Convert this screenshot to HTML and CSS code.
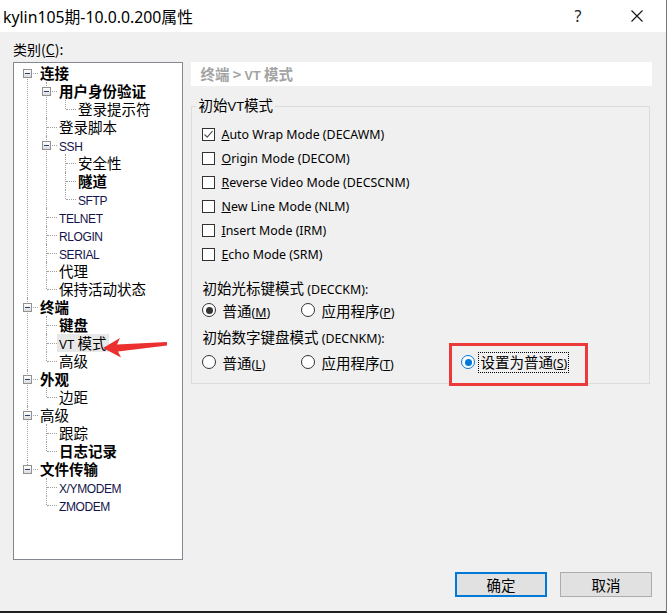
FILE: index.html
```html
<!DOCTYPE html>
<html lang="zh-CN">
<head>
<meta charset="utf-8">
<title>kylin105期-10.0.0.200属性</title>
<link rel="stylesheet" href="styles.css">
</head>
<body>
<div class="window">
  <div class="titlebar">
    <div class="title">kylin105期-10.0.0.200属性</div>
    <div class="tb-help">?</div>
    <div class="tb-close"><svg width="12" height="12" viewBox="0 0 12 12"><path d="M0.5 0.5 L11.5 11.5 M11.5 0.5 L0.5 11.5" stroke="#111" stroke-width="1.1" fill="none"/></svg></div>
  </div>
  <div class="content">
    <div class="cat-label">类别(<u>C</u>):</div>
    <div class="main">
      <div class="treebox">
        <ul class="tree root">
          <li><div class="row"><span class="exp"></span><span class="lbl b">连接</span></div>
            <ul>
              <li><div class="row"><span class="exp"></span><span class="lbl b">用户身份验证</span></div>
                <ul>
                  <li class="last"><div class="row"><span class="lbl">登录提示符</span></div></li>
                </ul>
              </li>
              <li><div class="row"><span class="lbl">登录脚本</span></div></li>
              <li><div class="row"><span class="exp"></span><span class="lbl lat">SSH</span></div>
                <ul>
                  <li><div class="row"><span class="lbl">安全性</span></div></li>
                  <li><div class="row"><span class="lbl b">隧道</span></div></li>
                  <li class="last"><div class="row"><span class="lbl lat">SFTP</span></div></li>
                </ul>
              </li>
              <li><div class="row"><span class="lbl lat">TELNET</span></div></li>
              <li><div class="row"><span class="lbl lat">RLOGIN</span></div></li>
              <li><div class="row"><span class="lbl lat">SERIAL</span></div></li>
              <li><div class="row"><span class="lbl">代理</span></div></li>
              <li class="last"><div class="row"><span class="lbl">保持活动状态</span></div></li>
            </ul>
          </li>
          <li><div class="row"><span class="exp"></span><span class="lbl b">终端</span></div>
            <ul>
              <li><div class="row"><span class="lbl b">键盘</span></div></li>
              <li><div class="row"><span class="lbl sel"><span class="lat">VT</span> 模式</span></div></li>
              <li class="last"><div class="row"><span class="lbl">高级</span></div></li>
            </ul>
          </li>
          <li><div class="row"><span class="exp"></span><span class="lbl b">外观</span></div>
            <ul>
              <li class="last"><div class="row"><span class="lbl">边距</span></div></li>
            </ul>
          </li>
          <li><div class="row"><span class="exp"></span><span class="lbl">高级</span></div>
            <ul>
              <li><div class="row"><span class="lbl">跟踪</span></div></li>
              <li class="last"><div class="row"><span class="lbl b">日志记录</span></div></li>
            </ul>
          </li>
          <li class="last"><div class="row"><span class="exp"></span><span class="lbl b">文件传输</span></div>
            <ul>
              <li><div class="row"><span class="lbl lat">X/YMODEM</span></div></li>
              <li class="last"><div class="row"><span class="lbl lat">ZMODEM</span></div></li>
            </ul>
          </li>
        </ul>
        <svg class="arrow" width="70" height="24" viewBox="0 0 70 24"><polygon points="3,13 20,3 17,9.5 67,7 67,10.5 18,16.5 21,22.5" fill="#ec2f2f"/></svg>
      </div>
      <div class="panel">
        <div class="crumb">终端 &gt; <span class="crumb-lat">VT</span> 模式</div>
        <fieldset class="group">
          <legend>初始<span class="vt">VT</span>模式</legend>
          <div class="cb-list">
            <div class="cb-row"><span class="cb checked"><svg width="11" height="11" viewBox="0 0 11 11"><polyline points="1.5,5.5 4.2,8.2 9.5,2.2" fill="none" stroke="#555" stroke-width="1.2"/></svg></span><span class="en"><u>A</u>uto Wrap Mode (DECAWM)</span></div>
            <div class="cb-row"><span class="cb"></span><span class="en"><u>O</u>rigin Mode (DECOM)</span></div>
            <div class="cb-row"><span class="cb"></span><span class="en"><u>R</u>everse Video Mode (DECSCNM)</span></div>
            <div class="cb-row"><span class="cb"></span><span class="en"><u>N</u>ew Line Mode (NLM)</span></div>
            <div class="cb-row"><span class="cb"></span><span class="en"><u>I</u>nsert Mode (IRM)</span></div>
            <div class="cb-row"><span class="cb"></span><span class="en"><u>E</u>cho Mode (SRM)</span></div>
          </div>
          <div class="sec-label first">初始光标键模式 <span class="en">(DECCKM):</span></div>
          <div class="radio-row">
            <div class="ropt"><span class="radio on"></span><span>普通<span class="en">(<u>M</u>)</span></span></div>
            <div class="ropt"><span class="radio"></span><span>应用程序<span class="en">(<u>P</u>)</span></span></div>
          </div>
          <div class="sec-label second">初始数字键盘模式 <span class="en">(DECNKM):</span></div>
          <div class="radio-row row2">
            <div class="ropt"><span class="radio"></span><span>普通<span class="en">(<u>L</u>)</span></span></div>
            <div class="ropt"><span class="radio"></span><span>应用程序<span class="en">(<u>T</u>)</span></span></div>
            <div class="ropt marked"><span class="radio blue"></span><span class="focus">设置为普通<span class="en">(<u>S</u>)</span></span></div>
          </div>
        </fieldset>
      </div>
    </div>
    <div class="footer">
      <button class="btn default">确定</button>
      <button class="btn">取消</button>
    </div>
  </div>
</div>
</body>
</html>
```

FILE: styles.css
```css
*, *::before, *::after { box-sizing: border-box; }
html, body { margin: 0; padding: 0; background: #fff; }
body {
  font-family: "Noto Sans", "Noto Sans CJK SC", sans-serif;
  color: #000;
}
.window {
  width: 667px;
  height: 613px;
  background: #f0f0f0;
  border-right: 1px solid #777;
  border-bottom: 2px solid #1f1f1f;
  display: flex;
  flex-direction: column;
}
.titlebar {
  height: 32px;
  background: #fff;
  display: flex;
  align-items: center;
  padding-left: 3px;
}
.title {
  font-size: 15.8px;
  flex: 1;
}
.tb-help {
  width: 46px;
  font-size: 16px;
  color: #222;
  text-align: center;
  margin-right: 13px;
}
.tb-close {
  width: 46px;
  display: flex;
  justify-content: center;
  margin-right: 6px;
}
.content { flex: 1; padding: 0 14px 0 13px; }
.cat-label {
  height: 30px;
  padding-top: 4px;
  line-height: 26px;
  font-size: 14px;
  font-family: "Noto Sans CJK SC", sans-serif;
}
.main { display: flex; gap: 8px; }
.treebox {
  position: relative;
  width: 171px;
  height: 498px;
  background: #fff;
  border: 1px solid #828790;
  padding-top: 1px;
}
.tree, .tree ul { list-style: none; margin: 0; padding: 0; }
.tree ul { margin-left: 19px; }
.tree li { position: relative; }
.tree li::before {
  content: "";
  position: absolute;
  left: 13px;
  top: 0;
  bottom: 0;
  width: 0;
  border-left: 1px dotted #a0a0a0;
}
.tree li.last::before { bottom: auto; height: 9px; }
.tree.root > li:first-child::before { top: 9px; }
.tree li::after {
  content: "";
  position: absolute;
  left: 14px;
  top: 9px;
  width: 10px;
  height: 0;
  border-top: 1px dotted #a0a0a0;
}
.row {
  position: relative;
  height: 18px;
  line-height: 18px;
  padding-left: 26px;
  font-family: "Noto Sans CJK SC", sans-serif;
  font-size: 14.5px;
  white-space: nowrap;
}
.exp {
  position: absolute;
  z-index: 1;
  left: 9px;
  top: 5px;
  width: 9px;
  height: 9px;
  border: 1px solid #919191;
  background: linear-gradient(#ffffff, #dcdcdc);
}
.exp::after {
  content: "";
  position: absolute;
  left: 1px;
  top: 3px;
  width: 5px;
  height: 1px;
  background: #2c3f78;
}
.lbl.b { font-weight: 700; }
.lat {
  font-family: "Liberation Sans", sans-serif;
  font-size: 12px;
  letter-spacing: -0.4px;
  color: #14144a;
}
.lbl.sel {
  background: #e8e8e8;
  margin-left: -2px;
  padding: 0 2px;
  display: inline-block;
  height: 18px;
}
.lbl.sel .lat { color: #000; letter-spacing: 0; }
.arrow {
  position: absolute;
  left: 86px;
  top: 272px;
}
.panel { width: 462px; display: flex; flex-direction: column; }
.crumb {
  height: 24px;
  line-height: 24px;
  background: #fff;
  padding-left: 9px;
  color: #a3a3a3;
  font-weight: 700;
  font-size: 14.5px;
  font-family: "Noto Sans CJK SC", sans-serif;
}
.crumb-lat { font-family: "Liberation Sans", sans-serif; font-size: 12.5px; }
.group {
  margin: 10px 2px 0 0;
  padding: 0 10px 9px 10px;
  border: 1px solid #dcdcdc;
  min-width: 0;
}
.group legend {
  padding: 0 2px;
  margin-left: -6px;
  font-size: 14.5px;
  line-height: 18px;
  font-family: "Noto Sans CJK SC", sans-serif;
}
.vt { font-family: "Liberation Sans", sans-serif; font-size: 13px; }
.cb-list { padding-top: 6px; }
.cb-row {
  height: 24px;
  display: flex;
  align-items: center;
}
.cb {
  width: 13px;
  height: 13px;
  border: 1px solid #333;
  background: #fff;
  margin-right: 6px;
  display: flex;
  align-items: center;
  justify-content: center;
}
.en {
  font-family: "Noto Sans", sans-serif;
  font-size: 12.4px;
}
.sec-label {
  height: 20px;
  line-height: 20px;
  font-family: "Noto Sans CJK SC", sans-serif;
  font-size: 14.5px;
}
.sec-label.first { margin-top: 12px; }
.sec-label.second { margin-top: 5px; }
.radio-row {
  height: 24px;
  display: grid;
  grid-template-columns: 99px 160px auto;
  font-family: "Noto Sans CJK SC", sans-serif;
  font-size: 14.5px;
}
.radio-row.row2 { margin-top: 3px; }
.ropt { display: flex; align-items: center; position: relative; height: 24px; }
.radio {
  width: 14px;
  height: 14px;
  border: 1px solid #333;
  border-radius: 50%;
  background: #fff;
  margin-right: 6px;
  position: relative;
  flex: none;
}
.radio.on::after, .radio.blue::after {
  content: "";
  position: absolute;
  left: 2.5px;
  top: 2.5px;
  width: 7px;
  height: 7px;
  border-radius: 50%;
  background: #333;
}
.radio.blue { border-color: #0078d7; }
.radio.blue::after { background: #0078d7; }
.focus {
  border: 1px dotted #000;
  padding: 0 1px;
  margin-left: -3px;
  line-height: 17px;
}
.marked::after {
  content: "";
  position: absolute;
  left: -12px;
  top: -7px;
  width: 139px;
  height: 43px;
  border: 3px solid #ec3a3a;
}
.footer {
  display: flex;
  justify-content: flex-end;
  gap: 13px;
  margin-top: 12px;
}
.btn {
  width: 92px;
  height: 25px;
  background: #e1e1e1;
  border: 1px solid #adadad;
  font-family: "Noto Sans CJK SC", sans-serif;
  font-size: 14.5px;
  padding: 0;
  color: #000;
}
.btn.default { border: 2px solid #0078d7; }
```
